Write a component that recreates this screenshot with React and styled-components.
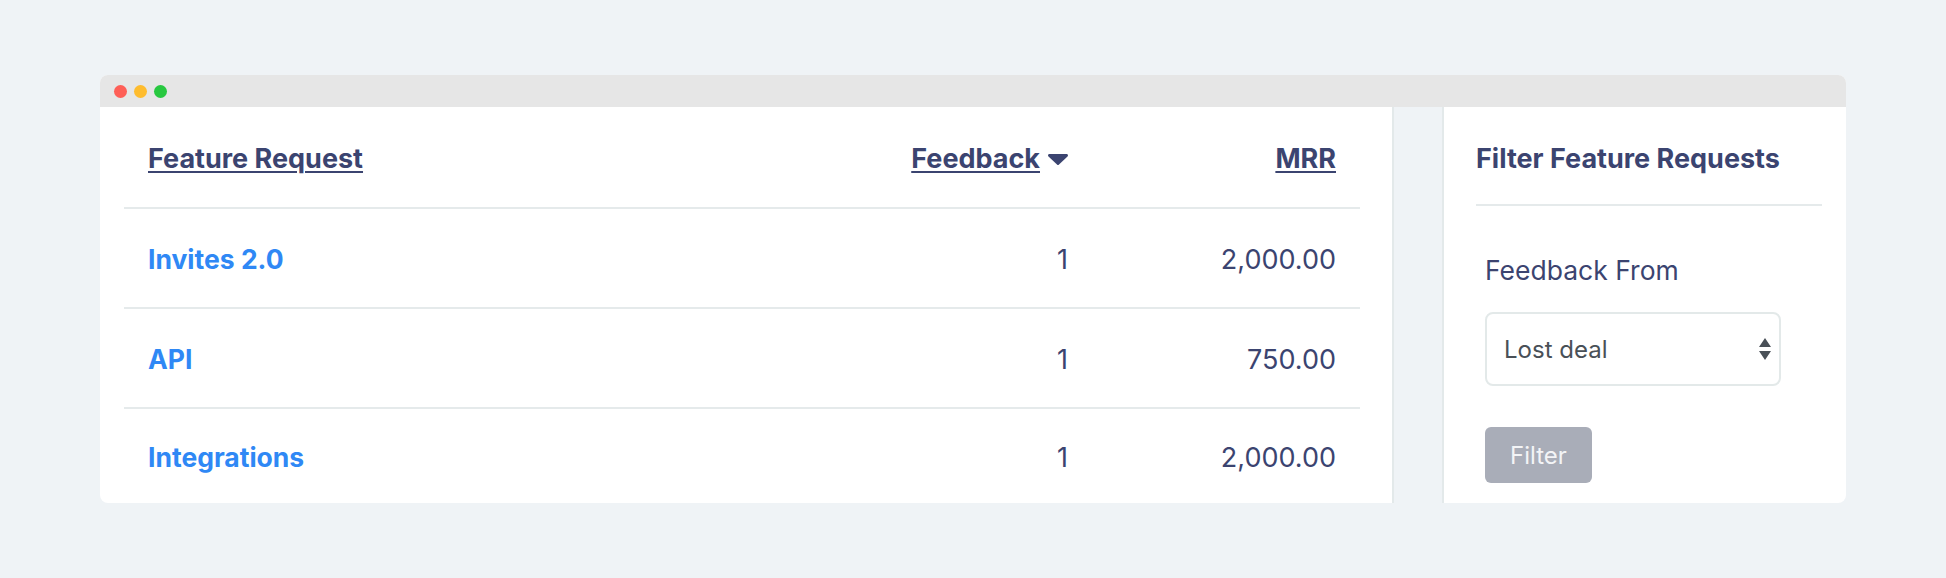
import React from 'react';
import styled, { createGlobalStyle } from 'styled-components';

const GlobalStyle = createGlobalStyle`
  body {
    margin: 0;
    background: #eff3f6;
    font-family: Inter, "Noto Sans", sans-serif;
  }
`;

const Page = styled.div`
  height: 578px;
  box-sizing: border-box;
  padding: 75px 100px 0;
`;

const Window = styled.div`
  background: #fff;
  border-radius: 8px;
  overflow: hidden;
`;

const TitleBar = styled.div`
  height: 32px;
  background: #e6e6e6;
  display: flex;
  align-items: center;
  gap: 7px;
  padding-left: 14px;
`;

const Dot = styled.span`
  width: 13px;
  height: 13px;
  border-radius: 50%;
  background: ${(p) => p.color};
`;

const Body = styled.div`
  display: flex;
  height: 396px;
`;

const Main = styled.div`
  width: 1292px;
  box-sizing: border-box;
  padding: 0 32px 0 24px;
`;

const Gutter = styled.div`
  width: 48px;
  background: #eff3f6;
  border-left: 2px solid #e3e9ea;
  border-right: 2px solid #e3e9ea;
`;

const Sidebar = styled.div`
  flex: 1;
  padding: 0 24px 0 32px;
`;

const Row = styled.div`
  display: grid;
  grid-template-columns: 1fr 260px 268px;
  align-items: center;
  box-sizing: border-box;
  height: ${(p) => p.h}px;
  border-bottom: ${(p) => (p.last ? 'none' : '2px solid #e5eaeb')};
`;

const Cell = styled.div`
  padding: 3px 24px 0;
  text-align: ${(p) => (p.right ? 'right' : 'left')};
  font-size: 27px;
  color: #3b4470;
`;

const HeadLink = styled.a`
  font-weight: 700;
  color: #3b4470;
  text-decoration: underline;
  text-decoration-thickness: 2px;
  text-underline-offset: 3px;
`;

const Caret = styled.svg`
  width: 20px;
  height: 11px;
  margin-left: 8px;
  vertical-align: 3px;
`;

const NameLink = styled.a`
  font-size: 26.5px;
  font-weight: 700;
  color: #2f88f5;
  text-decoration: none;
`;

const SideHeader = styled.div`
  height: 99px;
  box-sizing: border-box;
  padding-top: 5px;
  display: flex;
  align-items: center;
  border-bottom: 2px solid #e5eaeb;
  font-size: 27px;
  font-weight: 700;
  color: #3b4470;
`;

const Form = styled.div`
  padding: 49px 0 0 9px;
  display: flex;
  flex-direction: column;
  align-items: flex-start;
`;

const Label = styled.label`
  font-size: 26.5px;
  line-height: 30px;
  color: #3b4470;
`;

const SelectWrap = styled.div`
  position: relative;
  margin-top: 27px;
`;

const Select = styled.select`
  appearance: none;
  width: 296px;
  height: 74px;
  box-sizing: border-box;
  padding: 0 40px 0 17px;
  border: 2px solid #e3e9e9;
  border-radius: 8px;
  background: #fff;
  font-family: Inter, sans-serif;
  font-size: 24px;
  color: #495057;
`;

const Arrows = styled.svg`
  position: absolute;
  right: 10px;
  top: 26px;
  width: 12px;
  height: 22px;
  pointer-events: none;
`;

const Button = styled.button`
  margin-top: 41px;
  width: 107px;
  height: 56px;
  border: none;
  border-radius: 6px;
  background: #a9adb8;
  color: #f3f4f6;
  font-family: Inter, sans-serif;
  font-size: 24px;
`;

const rows = [
  { name: 'Invites 2.0', feedback: 1, mrr: '2,000.00' },
  { name: 'API', feedback: 1, mrr: '750.00' },
  { name: 'Integrations', feedback: 1, mrr: '2,000.00' },
];

function App() {
  return (
    <>
      <GlobalStyle />
      <Page>
        <Window>
          <TitleBar>
            <Dot color="#fe5f57" />
            <Dot color="#febc2e" />
            <Dot color="#28c840" />
          </TitleBar>
          <Body>
            <Main>
              <Row h={102}>
                <Cell>
                  <HeadLink>Feature Request</HeadLink>
                </Cell>
                <Cell right>
                  <HeadLink>Feedback</HeadLink>
                  <Caret viewBox="0 0 20 11">
                    <path d="M1.5 0h17c1.3 0 2 1.5 1 2.4l-8.5 8a1.4 1.4 0 0 1-2 0l-8.5-8C-.5 1.5.2 0 1.5 0z" fill="#3b4470" />
                  </Caret>
                </Cell>
                <Cell right>
                  <HeadLink>MRR</HeadLink>
                </Cell>
              </Row>
              {rows.map((item, i) => (
                <Row key={item.name} h={i === rows.length - 1 ? 94 : 100} last={i === rows.length - 1}>
                  <Cell>
                    <NameLink>{item.name}</NameLink>
                  </Cell>
                  <Cell right>{item.feedback}</Cell>
                  <Cell right>{item.mrr}</Cell>
                </Row>
              ))}
            </Main>
            <Gutter />
            <Sidebar>
              <SideHeader>Filter Feature Requests</SideHeader>
              <Form>
                <Label>Feedback From</Label>
                <SelectWrap>
                  <Select defaultValue="lost">
                    <option value="lost">Lost deal</option>
                    <option value="won">Won deal</option>
                  </Select>
                  <Arrows viewBox="0 0 12 22">
                    <path d="M6 0l6 9H0z M0 13h12l-6 9z" fill="#495057" />
                  </Arrows>
                </SelectWrap>
                <Button>Filter</Button>
              </Form>
            </Sidebar>
          </Body>
        </Window>
      </Page>
    </>
  );
}

export default App;
